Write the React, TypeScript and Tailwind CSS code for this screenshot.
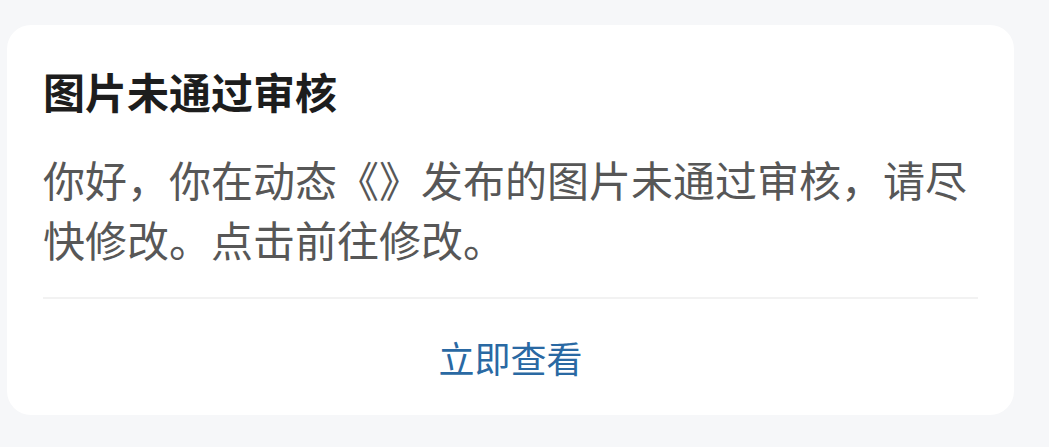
export default function App() {
  return (
    <div
      className="min-h-[447px] w-full bg-[#f6f7f9] pl-[7px] pt-[25px]"
      style={{ fontFamily: '"Noto Sans CJK SC", "Noto Sans", sans-serif' }}
    >
      <div className="w-[1007px] rounded-[24px] bg-white">
        <div className="px-[36px] pt-[36px]">
          <h2 className="text-[42px] font-bold leading-[60px] text-[#1d1d1d]">
            图片未通过审核
          </h2>
          <p className="mt-[28px] text-[42px] leading-[60px] text-[#575757]">
            你好，你在动态《》发布的图片未通过审核，请尽快修改。点击前往修改。
          </p>
          <div className="mt-[28px] h-[2px] bg-[#f2f2f2]" />
        </div>
        <button className="flex h-[116px] w-full items-center justify-center text-[36px] text-[#2a69a3]">
          立即查看
        </button>
      </div>
    </div>
  );
}
